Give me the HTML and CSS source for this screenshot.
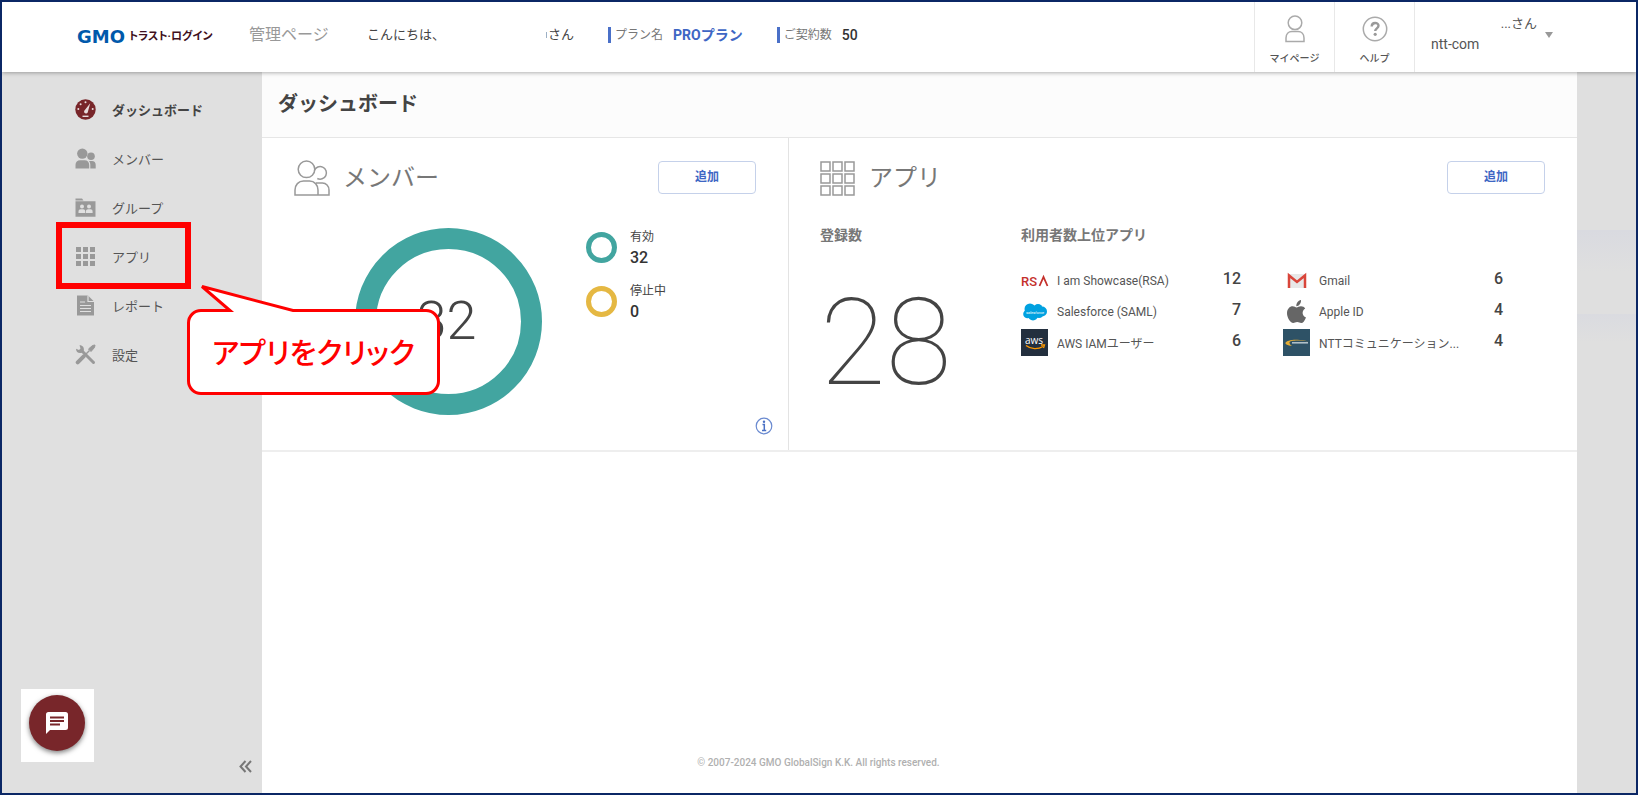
FILE: index.html
```
<!DOCTYPE html>
<html lang="ja">
<head>
    <meta charset="UTF-8">
    <title>ダッシュボード</title>
    <link rel="stylesheet" href="styles.css">
</head>
<body>

<header class="header">
    <a href="#" class="logo"><span class="logo-gmo">GMO</span><span class="logo-name">トラスト·ログイン</span></a>
    <span class="page-type">管理ページ</span>
    <p class="hello"><span>こんにちは、</span><span class="user">さん</span></p>
    <p class="plan"><span>プラン名</span><b class="blue">PROプラン</b></p>
    <p class="plan"><span>ご契約数</span><b>50</b></p>
    <nav class="tools">
        <a href="#" class="tool">
            <svg width="20" height="28" viewBox="0 0 20 28" fill="none" stroke="#aaa" stroke-width="1.5"><circle cx="10" cy="7.8" r="6.8"/><path d="M1 26.5v-3.500c0-4 2.500-6.600 6-6.600h6c3.500 0 6 2.600 6 6.600v3.500z"/></svg>
            <span>マイページ</span>
        </a>
        <a href="#" class="tool">
            <svg width="26" height="28" viewBox="0 0 26 28" fill="none"><circle cx="13" cy="14" r="11.700" stroke="#aaa" stroke-width="1.500"/><path d="M9.700 11.500c0-4.600 6.800-4.500 6.800-.7 0 2.500-3.300 2.600-3.300 5.200" stroke="#999" stroke-width="2.400"/><circle cx="13.200" cy="19.300" r="1.600" fill="#999"/></svg>
            <span>ヘルプ</span>
        </a>
        <button class="account">
            <span class="account-text"><span class="account-name">...さん</span><span class="account-org">ntt-com</span></span>
            <span class="caret"></span>
        </button>
    </nav>
</header>

<div class="wrap">
    <aside class="side">
        <ul class="menu">
            <li class="on"><a href="#">
                <svg width="21" height="21" viewBox="0 0 21 21"><circle cx="10.500" cy="10.500" r="10.200" fill="#78262a"/><g fill="#e8dcdc"><circle cx="10.500" cy="3.300" r="1"/><circle cx="5.600" cy="5.300" r="1"/><circle cx="3.300" cy="10" r="1"/><circle cx="17.700" cy="10" r="1"/><path d="M15.200 4.200l-2.500 9.300a2 2 0 0 1-3.600-1.600z"/><path d="M7.500 16.600h6v1.400h-6z"/></g></svg>
                ダッシュボード</a></li>
            <li><a href="#">
                <svg width="21" height="21" viewBox="0 0 21 21" fill="#999"><circle cx="7.300" cy="5.600" r="5.200"/><circle cx="16" cy="8.300" r="3.800"/><path d="M.5 20.500v-3.500c0-3 1.900-4.800 4.600-4.800h4.500c2.800 0 4.600 1.800 4.600 4.800v3.500zM15.300 20.500v-3.700c0-1.700-.5-2.900-1.300-3.900h3c2.300 0 3.700 1.500 3.700 3.900v3.700z"/></svg>
                メンバー</a></li>
            <li><a href="#">
                <svg width="21" height="21" viewBox="0 0 21 21"><path d="M.5 1.500h6.500l1.500 2H.5zM.5 4.300h20v15.500H.5z" fill="#999"/><g fill="#e0e0e0"><circle cx="7" cy="9.500" r="2"/><circle cx="14" cy="9.500" r="2"/><path d="M3.500 16v-1.500c0-1.500 1-2.200 2.200-2.200h2.500c1.200 0 2 .7 2 2.200v1.500zM10.900 16v-1.500c0-1.500 1-2.200 2.100-2.200h2.500c1.200 0 2.100.7 2.100 2.200v1.500z"/></g></svg>
                グループ</a></li>
            <li><a href="#">
                <svg width="21" height="21" viewBox="0 0 21 21" fill="#999"><path d="M1 1h5v5H1zM8 1h5v5H8zM15 1h5v5h-5zM1 8h5v5H1zM8 8h5v5H8zM15 8h5v5h-5zM1 15h5v5H1zM8 15h5v5H8zM15 15h5v5h-5z"/></svg>
                アプリ</a>
                <div class="mark"></div>
                <div class="balloon">
                    <svg width="96" height="28" viewBox="0 0 96 28"><path d="M33 26L3 2l91 24v2H33z" fill="#fff"/><path d="M18 25.500h13L3 1.500l91 24h2" fill="none" stroke="#f00" stroke-width="3"/></svg>
                    <p>アプリをクリック</p>
                </div>
            </li>
            <li><a href="#">
                <svg width="21" height="21" viewBox="0 0 21 21"><path d="M2 .5h11l6 6v14H2z" fill="#999"/><path d="M13 .5v6h6M5 7h5M5 10.500h11M5 13.500h11M5 16.500h11" fill="none" stroke="#e0e0e0" stroke-width="1.200"/></svg>
                レポート</a></li>
            <li><a href="#">
                <svg width="21" height="21" viewBox="0 0 21 21" fill="none" stroke="#999"><path d="M7.500 7.500l11 11" stroke-width="3" stroke-linecap="round"/><path d="M2.700 18.300l6-6" stroke-width="4" stroke-linecap="round"/><path d="M11 10l3.500-3.500" stroke-width="1.500"/><path d="M13.500 5l4-3.500 2.500-.5-.5 2.500-3.500 4z" fill="#999" stroke-width="1"/><path d="M4.500 1.200l1 3.300-1.500 1.500-3-1.300C1 8 3.500 9.800 6.800 8.800l2-2C9.600 3.500 7.500 1 4.500 1.200z" fill="#999" stroke="none"/></svg>
                設定</a></li>
        </ul>
        <button class="fold" aria-label="メニューを閉じる">
            <svg width="13" height="13" viewBox="0 0 13 13" fill="none" stroke="#777" stroke-width="2"><path d="M6.500 1L1.500 6.500l5 5.500M12 1L7 6.500l5 5.500"/></svg>
        </button>
        <div class="chat">
            <button aria-label="チャット">
                <svg width="24" height="24" viewBox="0 0 24 24"><path d="M3.500 1h17A2.500 2.500 0 0 1 23 3.500v13a2.500 2.500 0 0 1-2.500 2.500H5l-4 4V3.500A2.500 2.500 0 0 1 3.500 1z" fill="#fff"/><path d="M5 6.500h14M5 10h14M5 13.500h10" stroke="#78262a" stroke-width="2"/></svg>
            </button>
        </div>
    </aside>

    <main class="main">
        <h1>ダッシュボード</h1>
        <div class="panels">
            <section class="panel">
                <div class="panel-head">
                    <svg width="36" height="36" viewBox="0 0 36 36" fill="none" stroke="#999" stroke-width="1.500"><circle cx="12.500" cy="9.300" r="8.300"/><path d="M20.300 10.500a6.300 6.300 0 1 1 3 8M1 35v-5c0-5 3.500-9 8.500-9h6c5 0 8.500 4 8.500 9v5zM24 35h11v-5c0-4-3-7-6.500-7h-6.500"/></svg>
                    <h2>メンバー</h2>
                    <button class="add">追加</button>
                </div>
                <div class="members">
                    <div class="donut">32</div>
                    <ul class="legend">
                        <li><i class="ring"></i><p><span>有効</span><b>32</b></p></li>
                        <li><i class="ring stop"></i><p><span>停止中</span><b>0</b></p></li>
                    </ul>
                </div>
                <button class="info" aria-label="情報">
                    <svg width="18" height="18" viewBox="0 0 18 18"><circle cx="9" cy="9" r="7.800" fill="none" stroke="#6a8ad0" stroke-width="1.200"/><path d="M7.500 7.500H9.300v6M7 13.500h4.200" fill="none" stroke="#4a70c4" stroke-width="1.500"/><circle cx="9" cy="4.800" r="1.200" fill="#4a70c4"/></svg>
                </button>
            </section>
            <section class="panel panel-app">
                <div class="panel-head">
                    <svg width="36" height="36" viewBox="0 0 36 36" fill="none" stroke="#999" stroke-width="1.500"><path d="M1 2h9v9H1zM13 2h9v9h-9zM25 2h9v9h-9zM1 14h9v9H1zM13 14h9v9h-9zM25 14h9v9h-9zM1 26h9v9H1zM13 26h9v9h-9zM25 26h9v9h-9z"/></svg>
                    <h2>アプリ</h2>
                    <button class="add">追加</button>
                </div>
                <div class="apps">
                    <div class="total">
                        <h3>登録数</h3>
                        <p>28</p>
                    </div>
                    <div class="top">
                        <h3>利用者数上位アプリ</h3>
                        <ul class="top-list">
                            <li>
                                <svg width="28" height="28" viewBox="0 0 28 28"><text x="0" y="19" class="rsa">RS</text><path d="M18.500 19l4-9 4 9" fill="none" stroke="#c4302b" stroke-width="1.800"/></svg>
                                <span>I am Showcase(RSA)</span><b>12</b></li>
                            <li>
                                <svg width="28" height="28" viewBox="0 0 28 28"><circle cx="9" cy="11" r="5.500" fill="#00a1e0"/><circle cx="17" cy="10.500" r="4.500" fill="#00a1e0"/><circle cx="21" cy="13.500" r="5" fill="#00a1e0"/><circle cx="6.500" cy="16" r="4.300" fill="#00a1e0"/><circle cx="12" cy="17.500" r="5" fill="#00a1e0"/><circle cx="18" cy="16" r="4" fill="#00a1e0"/><text x="5" y="16" class="sf">salesforce</text></svg>
                                <span>Salesforce (SAML)</span><b>7</b></li>
                            <li>
                                <svg width="28" height="28" viewBox="0 0 28 28"><path d="M0 0h27v27H0z" fill="#232f3e"/><text x="4" y="15" class="aws">aws</text><path d="M5 16.500c5 4 12 4 17 1M20 16h3.500l-1 3" fill="none" stroke="#f90" stroke-width="1.300"/></svg>
                                <span>AWS IAMユーザー</span><b>6</b></li>
                            <li>
                                <svg width="28" height="28" viewBox="0 0 28 28"><path d="M5 7h18v14H5z" fill="#e8e8e8"/><path d="M6 21V8.500l8 6.500 8-6.500V21" fill="none" stroke="#d9453a" stroke-width="2.500"/></svg>
                                <span>Gmail</span><b>6</b></li>
                            <li>
                                <svg width="28" height="28" viewBox="0 0 28 28" fill="#666"><path d="M13.300 8.300c-.3-3 1.700-5.700 4.700-6.300.3 3.200-1.900 6-4.700 6.300z"/><path d="M13.500 9.500c1.300 0 2.500-1.200 4.500-1.200 1.800 0 3.300.8 4.200 2.200-3.800 2.300-3.200 7.400.8 8.900-1.100 2.900-2.900 5.600-4.800 5.600-1.500 0-2.200-.9-4-.9s-2.600.9-4 .9C7.300 25 4 19.600 4 15.300c0-4.300 2.700-7 5.700-7 1.700 0 2.900 1.200 3.800 1.200z"/></svg>
                                <span>Apple ID</span><b>4</b></li>
                            <li>
                                <svg width="28" height="28" viewBox="0 0 28 28"><path d="M0 0h27v27H0z" fill="#2e5266"/><path d="M9 17c-9-1-9-5 2-6.200 5-.5 10 .2 14 1.800-7-1.500-19-1.500-18.500 1.200 0 1.200 1 2.200 2.500 3.200z" fill="#e5ad35"/><path d="M9 13.800h16" stroke="#b8c7cf" stroke-width="1.500"/></svg>
                                <span>NTTコミュニケーション...</span><b>4</b></li>
                        </ul>
                    </div>
                </div>
            </section>
        </div>
        <footer>© 2007-2024 GMO GlobalSign K.K. All rights reserved.</footer>
    </main>
    <div class="gutter"></div>
</div>

</body>
</html>
```
FILE: styles.css
```
*{ margin: 0; padding: 0; box-sizing: border-box; text-decoration: none;}
body {display: flex;flex-direction: column;min-height: 100vh;border: 2px solid #0b2765;font-family: Roboto, "Noto Sans CJK JP", sans-serif;font-size: 13px;color: #444;background: #fff;}
a {color: inherit;}
ul {list-style: none;}
button {font: inherit;color: inherit;background: none;border: 0;cursor: pointer;}
svg {display: block;flex: none;}

/* header */
.header {display: flex;align-items: center;height: 70px;padding: 0 0 4px 75px;background: #fff;box-shadow: 0 1px 4px rgba(0,0,0,.3);position: relative;z-index: 2;}
.logo {display: flex;align-items: center;width: 172px;padding-top: 3px;white-space: nowrap;}
.logo-gmo {font: bold 18px/20px "DejaVu Sans", sans-serif;color: #0059ab;margin-right: 4px;}
.logo-name {font-size: 11px;line-height: 20px;font-weight: 700;font-feature-settings: "palt";color: #400f20;}
.page-type {width: 118px;font-size: 16px;line-height: 20px;color: #999;}
.hello {display: flex;align-items: center;justify-content: space-between;width: 207px;margin-right: 34px;line-height: 20px;}
.user {display: flex;align-items: center;gap: 1px;}
.user:before {content: "";width: 1px;height: 6px;background: #9db0c4;}
.plan {display: flex;align-items: center;gap: 10px;border-left: 3px solid #4a70c8;padding-left: 4px;margin-right: 34px;line-height: 16px;font-size: 12px;color: #777;}
.plan b {font-size: 14px;font-weight: 500;color: #333;}
.plan b.blue {font-weight: 700;color: #3e66c4;}
.tools {display: flex;height: 70px;margin: 0 0 -4px auto;}
.tool {display: flex;flex-direction: column;align-items: center;gap: 8px;width: 80px;padding-top: 13px;border-left: 1px solid #e8e8e8;font-size: 10px;line-height: 16px;font-weight: 500;color: #555;}
.account {display: flex;width: 222px;border-left: 1px solid #e8e8e8;padding: 12px 0 0 16px;color: #555;}
.account-text {display: flex;flex-direction: column;width: 106px;line-height: 20px;}
.account-name {align-self: flex-end;font-size: 13px;}
.account-org {align-self: flex-start;font-size: 14px;}
.caret {margin: 18px 0 0 8px;border: 4px solid transparent;border-top: 6px solid #999;border-bottom: 0;}

.wrap {display: flex;flex: 1;}

/* side menu */
.side {display: flex;flex-direction: column;flex: none;width: 260px;padding-top: 13px;background: #e0e0e0;position: relative;z-index: 1;}
.menu li {position: relative;color: #555;}
.menu a {display: flex;align-items: center;gap: 16px;height: 49px;padding-left: 73px;}
.menu .on {font-weight: 700;color: #444;}
.mark {position: absolute;left: 54px;top: -10px;width: 135px;height: 67px;border: 6px solid #f00;}
.balloon {position: absolute;left: 185px;top: 77px;width: 253px;height: 86px;border: 3px solid #f00;border-radius: 14px;background: #fff;color: #f00;}
.balloon svg {position: absolute;left: 9px;top: -27px;}
.balloon p {font-size: 29px;line-height: 84px;font-weight: 500;text-align: center;font-feature-settings: "palt";white-space: nowrap;}
.fold {display: flex;align-self: flex-end;margin: auto 10px 20px 0;}
.chat {position: absolute;left: 19px;bottom: 31px;padding: 6px 9px 11px 8px;background: #fff;}
.chat button {display: flex;align-items: center;justify-content: center;width: 56px;height: 56px;border-radius: 50%;background: #78262a;box-shadow: 0 2px 5px rgba(0,0,0,.5);}

/* main */
.main {display: flex;flex-direction: column;flex: 1;min-width: 0;background: #fff;}
.main h1 {height: 66px;padding-left: 16px;border-bottom: 1px solid #e6e6e6;background: #fcfcfc;font-size: 20px;line-height: 64px;}
.panels {display: grid;grid-template-columns: 2fr 3fr;border-bottom: 2px solid #eee;}
.panel {min-height: 312px;padding: 22px 32px 0;position: relative;}
.panel-app {border-left: 1px solid #e3e3e3;padding-left: 31px;}
.panel-head {display: flex;align-items: center;gap: 13px;height: 36px;}
.panel-head h2 {font-size: 24px;line-height: 34px;font-weight: 400;color: #777;}
.add {width: 98px;height: 33px;margin: 0 0 2px auto;padding-bottom: 3px;border: 1px solid #c5d1ea;border-radius: 4px;font-size: 12px;font-weight: 700;color: #3e66c4;}
.members {display: flex;gap: 44px;padding: 32px 0 0 61px;}
.donut {display: flex;align-items: center;justify-content: center;width: 187px;height: 187px;padding: 0 4px 3px 0;border: 21px solid #42a5a0;border-radius: 50%;font-size: 54px;font-weight: 300;}
.legend li {display: flex;gap: 13px;margin-bottom: 12px;}
.legend span {display: block;font-size: 12px;line-height: 18px;}
.legend b {display: block;font-size: 16px;line-height: 24px;font-weight: 500;color: #333;}
.ring {width: 31px;height: 31px;margin-top: 4px;border: 5px solid #42a5a0;border-radius: 50%;}
.stop {border-color: #e5b843;}
.info {position: absolute;right: 15px;bottom: 15px;}
.apps {display: flex;padding-top: 29px;}
.apps h3 {font-size: 14px;line-height: 20px;color: #777;}
.total {width: 201px;}
.total p {padding-top: 28px;font-size: 120px;line-height: 140px;font-weight: 100;}
.top {flex: 1;padding-right: 42px;}
.top-list {display: grid;grid-template: repeat(3, 31px) / 1fr 1fr;grid-auto-flow: column;column-gap: 42px;padding-top: 20px;}
.top-list li {display: flex;align-items: center;gap: 8px;font-size: 12px;color: #555;white-space: nowrap;}
.top-list b {margin-left: auto;font-size: 16px;line-height: 28px;align-self: flex-start;font-weight: 500;color: #444;}
.rsa {font: 500 13px Roboto, sans-serif;fill: #c4302b;}
.sf {font: italic 4px Roboto, sans-serif;fill: #fff;}
.aws {font: 500 10px "Open Sans", sans-serif;fill: #fff;}
.main footer {margin-top: auto;padding: 0 202px 22px 0;text-align: center;font-size: 10px;line-height: 16px;font-weight: 500;color: #b0b0b0;}
.gutter {flex: none;width: 59px;background: linear-gradient(#dfdfdf 158px, #d9dae0 158px, #dfdfdf 200px, #dfdfdf 242px, #dadbe0 242px, #dfdfdf 270px);}
```
